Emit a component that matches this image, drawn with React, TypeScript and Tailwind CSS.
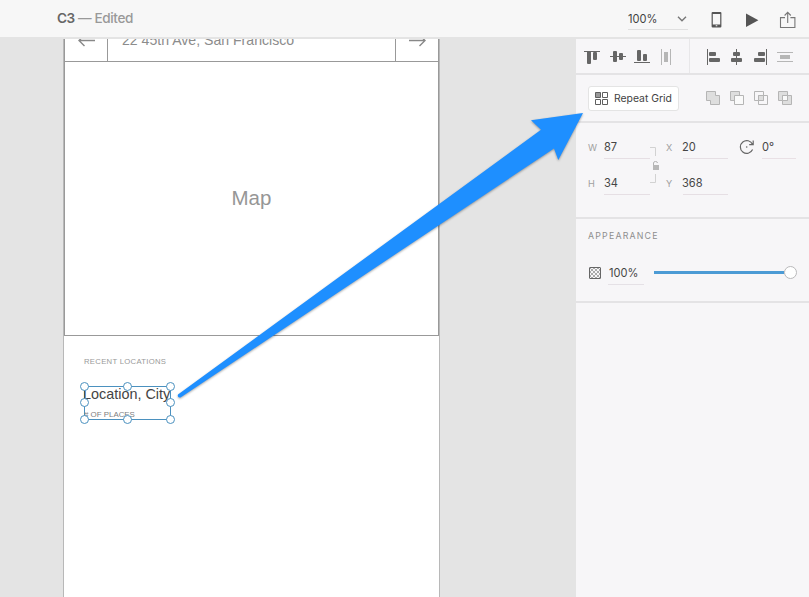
import React from 'react';

function Header() {
  return (
    <header className="flex h-[39px] shrink-0 border-b-2 border-[#e4e4e4] bg-[#f7f7f7]">
      <div className="w-[628px] shrink-0 pl-[57px] pt-[9px] text-[13.6px] font-medium leading-[18px] tracking-[-0.4px] text-[#999]">
        <span className="font-semibold text-[#666]">C3</span> — Edited
      </div>
      <div className="mt-[9px] flex h-[21px] w-[60px] justify-between border-b border-[#e0e0e0]">
        <span className="text-[11.1px] leading-[20px] text-[#414141]">100%</span>
        <svg className="mr-[1px] mt-[7px] h-[6px] w-[10px]" viewBox="0 0 10 6" fill="none" stroke="#777" strokeWidth="1.4">
          <path d="M1 .8 5 4.8 9 .8" />
        </svg>
      </div>
      <svg className="ml-[23px] mt-[12px] h-[16px] w-[11px]" viewBox="0 0 11 16">
        <path fill="#555" fillRule="evenodd" d="M1.6 0h7.8q1 0 1 1v13.6q0 1-1 1H1.6q-1 0-1-1V1q0-1 1-1ZM1.8 2v10.5h7.4V2ZM4.7 13.3v1h1.6v-1Z" />
      </svg>
      <svg className="ml-[24px] mt-[13px] h-[15px] w-[13px]" viewBox="0 0 13 15">
        <path fill="#555" d="M0 .6 12.4 7.3 0 14Z" />
      </svg>
      <svg className="ml-[20px] mt-[11px] h-[18px] w-[18px]" viewBox="0 0 18 18" fill="none" stroke="#777" strokeWidth="1.1">
        <path d="M6 6.6H1.5v9.9h14.4V6.6h-4.5M8.7 12V1.6M5.6 4.5l3.1-3.2 3.1 3.2" />
      </svg>
    </header>
  );
}

function Handle({ className }: { className: string }) {
  return <i className={`absolute h-[9px] w-[9px] rounded-full border border-[#4b91bf] bg-white ${className}`} />;
}

function Artboard() {
  return (
    <section className="ml-[63px] flex w-[377px] shrink-0 flex-col border-x border-[#b8b8b8] bg-white font-['Liberation_Sans',Arial,sans-serif]">
      <div className="flex h-[23px] overflow-hidden border-x border-b border-[#999] text-[#8c8c8c]">
        <div className="w-[43px] border-r border-[#999]">
          <svg className="ml-[13px] -mt-[4px] h-[12px] w-[18px]" viewBox="0 0 18 12" fill="none" stroke="#888" strokeWidth="1.4">
            <path d="M17 5.5H1M6.5 0 1 5.5 6.5 11" />
          </svg>
        </div>
        <div className="flex-1 whitespace-nowrap pl-[14px]">
          <p className="-mt-[8px] text-[14.1px] leading-[18px]">22 45th Ave, San Francisco</p>
        </div>
        <div className="w-[43px] border-l border-[#999]">
          <svg className="ml-[13px] -mt-[4px] h-[12px] w-[18px]" viewBox="0 0 18 12" fill="none" stroke="#888" strokeWidth="1.4">
            <path d="M0 5.5h16M10.5 0 16 5.5 10.5 11" />
          </svg>
        </div>
      </div>
      <div className="flex h-[274px] items-center justify-center border-x border-b border-[#999] text-[20.5px] text-[#969696]">
        <span>Map</span>
      </div>
      <p className="ml-[20px] mt-[20px] text-[7.7px] leading-[11px] tracking-[0.3px] text-[#999]">RECENT LOCATIONS</p>
      <div className="relative ml-[20px] mt-[19px] h-[34px] w-[87px] whitespace-nowrap border border-[#4b91bf]">
        <p className="-ml-[2px] -mt-px text-[14.4px] leading-[16px] text-[#444]">Location, City</p>
        <p className="-ml-px mt-[8px] text-[7.9px] leading-[10px] text-[#808080]"># OF PLACES</p>
        <Handle className="-left-[5px] -top-[5px]" />
        <Handle className="left-[38px] -top-[5px]" />
        <Handle className="-right-[5px] -top-[5px]" />
        <Handle className="-left-[5px] top-[11px]" />
        <Handle className="-right-[5px] top-[11px]" />
        <Handle className="-bottom-[5px] -left-[5px]" />
        <Handle className="-bottom-[5px] left-[38px]" />
        <Handle className="-bottom-[5px] -right-[5px]" />
      </div>
    </section>
  );
}

function AlignBar() {
  return (
    <div className="flex h-[36px] items-center border-b-2 border-[#e4e3e5]">
      <svg className="ml-[8px] mt-[2px] h-[16px] w-[90px]" viewBox="584 49 90 16" fill="#666">
        <path d="M584 51h16v1h-16zM610 56h16v1h-16zM634 62h16v1h-16z" />
        <rect x="587" y="51" width="4" height="13" rx="1" />
        <rect x="593" y="52" width="4" height="8" rx="1" />
        <rect x="613" y="51" width="4" height="11" rx="1" />
        <rect x="619" y="53" width="4" height="7" rx="1" />
        <rect x="637" y="50" width="4" height="11" rx="1" />
        <rect x="643" y="54" width="4" height="7" rx="1" />
        <path fill="#b6b6b6" d="M661 49h1v16h-1zM670 49h1v16h-1zM664 52h4v10h-4z" />
      </svg>
      <div className="ml-[15px] h-full w-px bg-[#e8e7e9]" />
      <svg className="ml-[17px] mt-[2px] h-[16px] w-[90px]" viewBox="707 49 90 16" fill="#666">
        <path d="M707 49h1v16h-1zM736 49h1v16h-1zM766 49h1v16h-1z" />
        <rect x="709" y="52" width="7" height="4" rx="1" />
        <rect x="709" y="58" width="11" height="4" rx="1" />
        <rect x="733" y="52" width="7" height="4" rx="1" />
        <rect x="731" y="58" width="11" height="4" rx="1" />
        <rect x="758" y="52" width="7" height="4" rx="1" />
        <rect x="754" y="58" width="11" height="4" rx="1" />
        <path fill="#b6b6b6" d="M777 52h16v1h-16zM777 61h16v1h-16zM780 55h10v4h-10z" />
      </svg>
    </div>
  );
}

function RepeatBar() {
  return (
    <div className="flex h-[48px] items-center border-b-2 border-[#e4e3e5]">
      <button className="ml-[12px] flex h-[25px] w-[91px] items-center rounded-[3px] border border-[#e4e4e4] bg-white pl-[6px] text-[10.4px] text-[#424242]">
        <svg className="mr-[6px] h-[13px] w-[13px] shrink-0" viewBox="0 0 13 13" fill="none" stroke="#5f5f5f">
          <path fill="#999" d="M.5.5h5v5h-5z" />
          <path d="M7.5.5h5v5h-5zM.5 7.5h5v5h-5zM7.5 7.5h5v5h-5z" />
        </svg>
        <span className="mt-px whitespace-nowrap">Repeat Grid</span>
      </button>
      <div className="ml-[27px] flex gap-[10px]">
        <svg className="h-[14px] w-[14px]" viewBox="0 0 14 14" fill="#dedede" stroke="#b5b5b5">
          <path d="M.5.5h9v4h4v9h-9v-4h-4z" />
        </svg>
        <svg className="h-[14px] w-[14px]" viewBox="0 0 14 14" fill="#dedede" stroke="#b5b5b5">
          <path d="M.5.5h9v9h-9z" />
          <path fill="#fafafa" d="M4.5 4.5h9v9h-9z" />
        </svg>
        <svg className="h-[14px] w-[14px]" viewBox="0 0 14 14" fill="none" stroke="#b5b5b5">
          <path d="M.5.5h9v9h-9zM4.5 4.5h9v9h-9z" />
          <path fill="#dedede" d="M4.5 4.5h5v5h-5z" />
        </svg>
        <svg className="h-[14px] w-[14px]" viewBox="0 0 14 14" fill="#dedede" stroke="#b5b5b5">
          <path d="M.5.5h9v9h-9zM4.5 4.5h9v9h-9z" />
          <path fill="#fafafa" d="M4.5 4.5h5v5h-5z" />
        </svg>
      </div>
    </div>
  );
}

function Field({ label, value }: { label: string; value: string }) {
  return (
    <label className="flex h-[24px]">
      <span className="w-[16px] text-[9.2px] leading-[25px] text-[#a0a0a0]">{label}</span>
      <span className="flex-1 border-b border-[#e6dfe4] text-[11.1px] leading-[24px] text-[#454545]">{value}</span>
    </label>
  );
}

function Transform() {
  return (
    <div className="flex h-[96px] border-b-2 border-[#e4e3e5] pl-[12px] pt-[12px]">
      <div className="flex w-[62px] flex-col gap-[12px]">
        <Field label="W" value="87" />
        <Field label="H" value="34" />
      </div>
      <svg className="mt-[12px] h-[38px] w-[10px]" viewBox="0 0 10 38" fill="none" stroke="#d2d2d2">
        <path d="M0 .5h5.5V9M0 35.5h5.5V27" />
        <path stroke="#b3b3b3" d="M3.5 19v-3q0-1.5 2-1.5t2 1.5" />
        <path fill="#b8b8b8" stroke="none" d="M3 18h6v5H3z" />
      </svg>
      <div className="ml-[6px] flex w-[62px] flex-col gap-[12px] pl-px -indent-px">
        <Field label="X" value="20" />
        <Field label="Y" value="368" />
      </div>
      <svg className="ml-[11px] mt-[4px] h-[16px] w-[16px]" viewBox="0 0 16 16" fill="none" stroke="#666" strokeWidth="1.2">
        <path d="M13.6 10.6A6.4 6.4 0 1 1 13.6 5.4M14.2 1.5v4.2h-4" />
        <circle cx="7.7" cy="8" r=".8" fill="#666" stroke="none" />
      </svg>
      <span className="ml-[7px] h-[24px] w-[34px] border-b border-[#e9e0e5] text-[11.1px] leading-[24px] text-[#454545]">0°</span>
    </div>
  );
}

function Appearance() {
  return (
    <div className="h-[84px] border-b-2 border-[#e4e3e5] pl-[12px] pt-[11px]">
      <h2 className="text-[8.8px] leading-[12px] tracking-[1.2px] text-[#8e8e8e]">APPEARANCE</h2>
      <div className="mt-[19px] flex h-[24px] items-center">
        <svg className="ml-[1px] h-[12px] w-[12px]" viewBox="0 0 12 12">
          <defs>
            <pattern id="checker" width="4" height="4" patternUnits="userSpaceOnUse">
              <path fill="#aaa" d="M0 0h2v2H0zM2 2h2v2H2z" />
            </pattern>
          </defs>
          <rect x=".5" y=".5" width="11" height="11" rx=".5" fill="url(#checker)" stroke="#666" />
        </svg>
        <span className="ml-[7px] h-[24px] w-[36px] border-b border-[#e5e1e6] pl-[1px] text-[11.1px] leading-[24px] text-[#454545]">100%</span>
        <div className="mb-px ml-[10px] flex items-center">
          <div className="h-[3px] w-[130px] bg-[#4c9bd5]" />
          <div className="h-[13px] w-[13px] rounded-full border border-[#b9b9bb] bg-white" />
        </div>
      </div>
    </div>
  );
}

export default function App() {
  return (
    <div className="relative flex h-[597px] w-[809px] flex-col overflow-hidden bg-[#e4e4e4] font-[Inter,Roboto,sans-serif]">
      <Header />
      <main className="flex flex-1">
        <Artboard />
        <aside className="ml-auto w-[233px] bg-[#f7f6f8]">
          <AlignBar />
          <RepeatBar />
          <Transform />
          <Appearance />
        </aside>
      </main>

      {/* callout arrow from the selection to the Repeat Grid button */}
      <svg className="pointer-events-none absolute inset-0 drop-shadow-[0_1px_1px_rgba(0,0,0,0.35)]" width="809" height="597" viewBox="0 0 809 597">
        <path fill="#1e8fff" d="M583 113 531 120.3 541 129.8 178 394.5Q177 398 180.5 397.5L554 148.5 558.3 160Z" />
      </svg>
    </div>
  );
}
